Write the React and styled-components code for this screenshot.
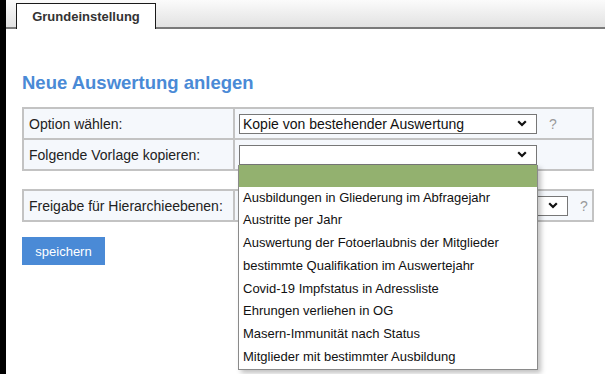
import React from 'react'
import styled, { createGlobalStyle } from 'styled-components'

const GlobalStyle = createGlobalStyle`
	html, body {
		margin: 0;
		padding: 0;
		background: #fff;
	}
	body {
		font-family: 'Liberation Sans', Arial, sans-serif;
		color: #222;
	}
`

const templates = [
	'Ausbildungen in Gliederung im Abfragejahr',
	'Austritte per Jahr',
	'Auswertung der Fotoerlaubnis der Mitglieder',
	'bestimmte Qualifikation im Auswertejahr',
	'Covid-19 Impfstatus in Adressliste',
	'Ehrungen verliehen in OG',
	'Masern-Immunität nach Status',
	'Mitglieder mit bestimmter Ausbildung',
]

const Chevron = () => (
	<svg width="10" height="7" viewBox="0 0 10 7">
		<path d="M1.2 1.2 L5 5 L8.8 1.2" fill="none" stroke="#111" strokeWidth="2.2" />
	</svg>
)

const Select = ({ value, width, open, options }) => (
	<SelectWrap>
		<StyledSelect width={width}>
			<SelectValue>{value}</SelectValue>
			<Chevron />
		</StyledSelect>
		{open && (
			<ListBox>
				<ListItem selected />
				{options.map(option => (
					<ListItem key={option}>{option}</ListItem>
				))}
			</ListBox>
		)}
	</SelectWrap>
)

const App = () => (
	<>
		<GlobalStyle />
		<Page>
			<SideStrip />
			<Main>
				<TabBar>
					<Tab>Grundeinstellung</Tab>
				</TabBar>
				<Content>
					<Heading>Neue Auswertung anlegen</Heading>
					<FormTable>
						<tbody>
							<tr>
								<LabelCell>Option wählen:</LabelCell>
								<FieldCell>
									<FieldRow>
										<Select value="Kopie von bestehender Auswertung" width={298} />
										<Help>?</Help>
									</FieldRow>
								</FieldCell>
							</tr>
							<tr>
								<LabelCell>Folgende Vorlage kopieren:</LabelCell>
								<FieldCell>
									<FieldRow>
										<Select value="" width={298} open options={templates} />
									</FieldRow>
								</FieldCell>
							</tr>
						</tbody>
					</FormTable>
					<FormTable>
						<tbody>
							<tr>
								<LabelCell>Freigabe für Hierarchieebenen:</LabelCell>
								<FieldCell>
									<FieldRow>
										<Select value="" width={329} />
										<Help>?</Help>
									</FieldRow>
								</FieldCell>
							</tr>
						</tbody>
					</FormTable>
					<SaveButton>speichern</SaveButton>
				</Content>
			</Main>
		</Page>
	</>
)

export default App

const Page = styled.div`
	display: flex;
	min-height: 374px;
`
const SideStrip = styled.div`
	width: 6px;
	background: #000;
	flex-shrink: 0;
`
const Main = styled.div`
	flex: 1;
	display: flex;
	flex-direction: column;
`
const TabBar = styled.div`
	height: 27px;
	display: flex;
	align-items: flex-end;
	padding-left: 10px;
	background: linear-gradient(#fbfbfb, #e2e2e2);
	border-bottom: 2px solid #7a7a7a;
`
const Tab = styled.div`
	width: 138px;
	height: 24px;
	margin-bottom: -2px;
	box-sizing: content-box;
	border: 1px solid #1a1a1a;
	border-bottom: none;
	background: #fff;
	display: flex;
	align-items: center;
	justify-content: center;
	font-size: 13px;
	font-weight: bold;
	color: #333;
	padding-bottom: 1px;
`
const Content = styled.div`
	padding: 43px 0 0 16px;
`
const Heading = styled.h1`
	margin: 0 0 13px;
	font-size: 18.5px;
	line-height: 22px;
	font-weight: bold;
	color: #4a8ad6;
`
const FormTable = styled.table`
	width: 572px;
	table-layout: fixed;
	border-collapse: collapse;
	margin-bottom: 18px;
	font-size: 14px;
`
const LabelCell = styled.td`
	width: 200px;
	height: 29px;
	padding: 0 4px 0 5px;
	border: 2px solid #c3c3c3;
	background: #f5f8fc;
	color: #222;
	vertical-align: middle;
	white-space: nowrap;
`
const FieldCell = styled.td`
	padding: 0 4px;
	border: 2px solid #c3c3c3;
	background: #f5f8fc;
	vertical-align: middle;
`
const FieldRow = styled.div`
	display: flex;
	align-items: center;
	gap: 12px;
`
const Help = styled.span`
	color: #9a9a9a;
	font-size: 14px;
`
const SelectWrap = styled.div`
	position: relative;
`
const StyledSelect = styled.div`
	width: ${props => props.width}px;
	height: 20px;
	box-sizing: border-box;
	border: 1px solid #777;
	background: #fff;
	display: flex;
	align-items: center;
	justify-content: space-between;
	padding: 0 9px 0 3px;
	font-size: 14px;
	color: #111;
`
const SelectValue = styled.span`
	white-space: nowrap;
`
const ListBox = styled.div`
	position: absolute;
	top: 20px;
	left: -1px;
	width: 300px;
	box-sizing: border-box;
	border: 1px solid #8a8a8a;
	border-top: none;
	background: #fff;
	box-shadow: 3px 3px 5px rgba(0, 0, 0, 0.25);
	z-index: 10;
`
const ListItem = styled.div`
	height: ${props => (props.selected ? 22 : 22.75)}px;
	line-height: ${props => (props.selected ? 22 : 22.75)}px;
	padding-left: 4px;
	font-size: 13px;
	color: #111;
	white-space: nowrap;
	background: ${props => (props.selected ? '#93b16f' : '#fff')};
`
const SaveButton = styled.button`
	margin-top: -3px;
	width: 83px;
	height: 28px;
	border: none;
	background: #4a8ad6;
	color: #fff;
	font-family: 'Liberation Sans', Arial, sans-serif;
	font-size: 13px;
	padding: 0;
`
